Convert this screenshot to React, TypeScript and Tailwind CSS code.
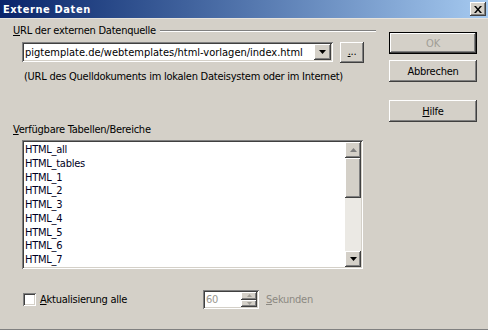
const font = "font-['DejaVu_Sans_Condensed','DejaVu_Sans',sans-serif]";
const raised =
  "bg-[#d4d0c8] shadow-[inset_-1px_-1px_0_#404040,inset_1px_1px_0_#ffffff,inset_-2px_-2px_0_#808080,inset_2px_2px_0_#d4d0c8]";
const sunken =
  "shadow-[inset_1px_1px_0_#808080,inset_-1px_-1px_0_#ffffff,inset_2px_2px_0_#404040,inset_-2px_-2px_0_#d4d0c8]";

const tables = ["HTML_all", "HTML_tables", "HTML_1", "HTML_2", "HTML_3", "HTML_4", "HTML_5", "HTML_6", "HTML_7"];

function Arrow({ up, color = "#000" }: { up?: boolean; color?: string }) {
  return (
    <svg width="7" height="4" viewBox="0 0 7 4">
      <path d={up ? "M3.5 0 L7 4 L0 4 Z" : "M0 0 L7 0 L3.5 4 Z"} fill={color} />
    </svg>
  );
}

function DialogButton({ children, isDefault }: { children: React.ReactNode; isDefault?: boolean }) {
  return (
    <div className={`h-[22px] w-[88px] ${isDefault ? "border border-black" : ""}`}>
      <div className={`flex h-full w-full items-center justify-center ${raised}`}>{children}</div>
    </div>
  );
}

export default function App() {
  return (
    <div
      className={`h-[330px] w-[488px] overflow-hidden bg-[#d4d0c8] text-[11px] leading-[13px] tracking-[-0.25px] text-black ${font}`}
    >
      <div className="flex h-[18px] items-center justify-between bg-linear-to-r from-[#0a246a] to-[#a6caf0] pl-[3px] pr-[2px]">
        <span className="font-bold tracking-[0.6px] text-white">Externe Daten</span>
        <div className={`flex h-[14px] w-[16px] items-center justify-center ${raised}`}>
          <svg width="8" height="7" viewBox="0 0 8 7">
            <path d="M0 0 L2 0 L4 2.5 L6 0 L8 0 L5 3.5 L8 7 L6 7 L4 4.5 L2 7 L0 7 L3 3.5 Z" fill="#000" />
          </svg>
        </div>
      </div>
      <div className="h-px bg-[#e6e3dd]" />

      <div className="flex h-[311px] border-b border-[#808080]">
        <div className="w-[376px] pl-[13px]">
          <div className="mt-[5px] flex items-center">
            <span>
              <u>U</u>RL der externen Datenquelle
            </span>
            <div className="ml-[4px] flex-1 border-t border-b border-t-[#808080] border-b-white" />
          </div>

          <div className="mt-[5px] flex items-start pl-[9px]">
            <div className={`flex h-[20px] w-[311px] items-center bg-white p-[2px] ${sunken}`}>
              <span className="flex-1 overflow-hidden whitespace-nowrap pl-[1px] tracking-normal">
                pigtemplate.de/webtemplates/html-vorlagen/index.html
              </span>
              <div className={`flex h-[16px] w-[17px] items-center justify-center ${raised}`}>
                <Arrow />
              </div>
            </div>
            <div className={`ml-[7px] flex h-[21px] w-[24px] items-center justify-center pb-[2px] ${raised}`}>
              <span>
                <u>.</u>..
              </span>
            </div>
          </div>

          <div className="mt-[7px] pl-[11px]">(URL des Quelldokuments im lokalen Dateisystem oder im Internet)</div>

          <div className="mt-[40px]">
            <u>V</u>erfügbare Tabellen/Bereiche
          </div>

          <div className={`ml-[9px] mt-[4px] flex h-[129px] w-[341px] bg-white p-[2px] ${sunken}`}>
            <div className="flex-1 pl-[1px] pt-[1px] leading-[13.75px] text-[#000022]">
              {tables.map((t) => (
                <div key={t}>{t}</div>
              ))}
            </div>
            <div className="flex w-[16px] flex-col bg-[#ebe9e4]">
              <div className={`flex h-[16px] items-center justify-center ${raised}`}>
                <Arrow up color="#808080" />
              </div>
              <div className={`h-[40px] ${raised}`} />
              <div className="flex-1" />
              <div className={`flex h-[16px] items-center justify-center ${raised}`}>
                <Arrow />
              </div>
            </div>
          </div>

          <div className="mt-[21px] flex h-[19px] items-center pl-[10px]">
            <div className={`h-[13px] w-[13px] bg-white ${sunken}`} />
            <span className="ml-[4px] w-[163px]">
              <u>A</u>ktualisierung alle
            </span>
            <div className={`flex h-[19px] w-[56px] items-center bg-white p-[2px] ${sunken}`}>
              <span className="flex-1 pl-[1px] text-[#9a978f]">60</span>
              <div className="flex h-full w-[16px] flex-col">
                <div className={`flex flex-1 items-center justify-center ${raised}`}>
                  <svg width="5" height="3" viewBox="0 0 5 3">
                    <path d="M2.5 0 L5 3 L0 3 Z" fill="#a09d96" />
                  </svg>
                </div>
                <div className={`flex flex-1 items-center justify-center ${raised}`}>
                  <svg width="5" height="3" viewBox="0 0 5 3">
                    <path d="M0 0 L5 0 L2.5 3 Z" fill="#a09d96" />
                  </svg>
                </div>
              </div>
            </div>
            <span className="ml-[7px] text-[#8c8982]">
              <u>S</u>ekunden
            </span>
          </div>
        </div>

        <div className="flex flex-col gap-[6px] pl-[13px] pt-[13px]">
          <DialogButton isDefault>
            <span className="text-[#a19e96]">OK</span>
          </DialogButton>
          <DialogButton>Abbrechen</DialogButton>
          <div className="mt-[12px]">
            <DialogButton>
              <span>
                <u>H</u>ilfe
              </span>
            </DialogButton>
          </div>
        </div>
      </div>
    </div>
  );
}
